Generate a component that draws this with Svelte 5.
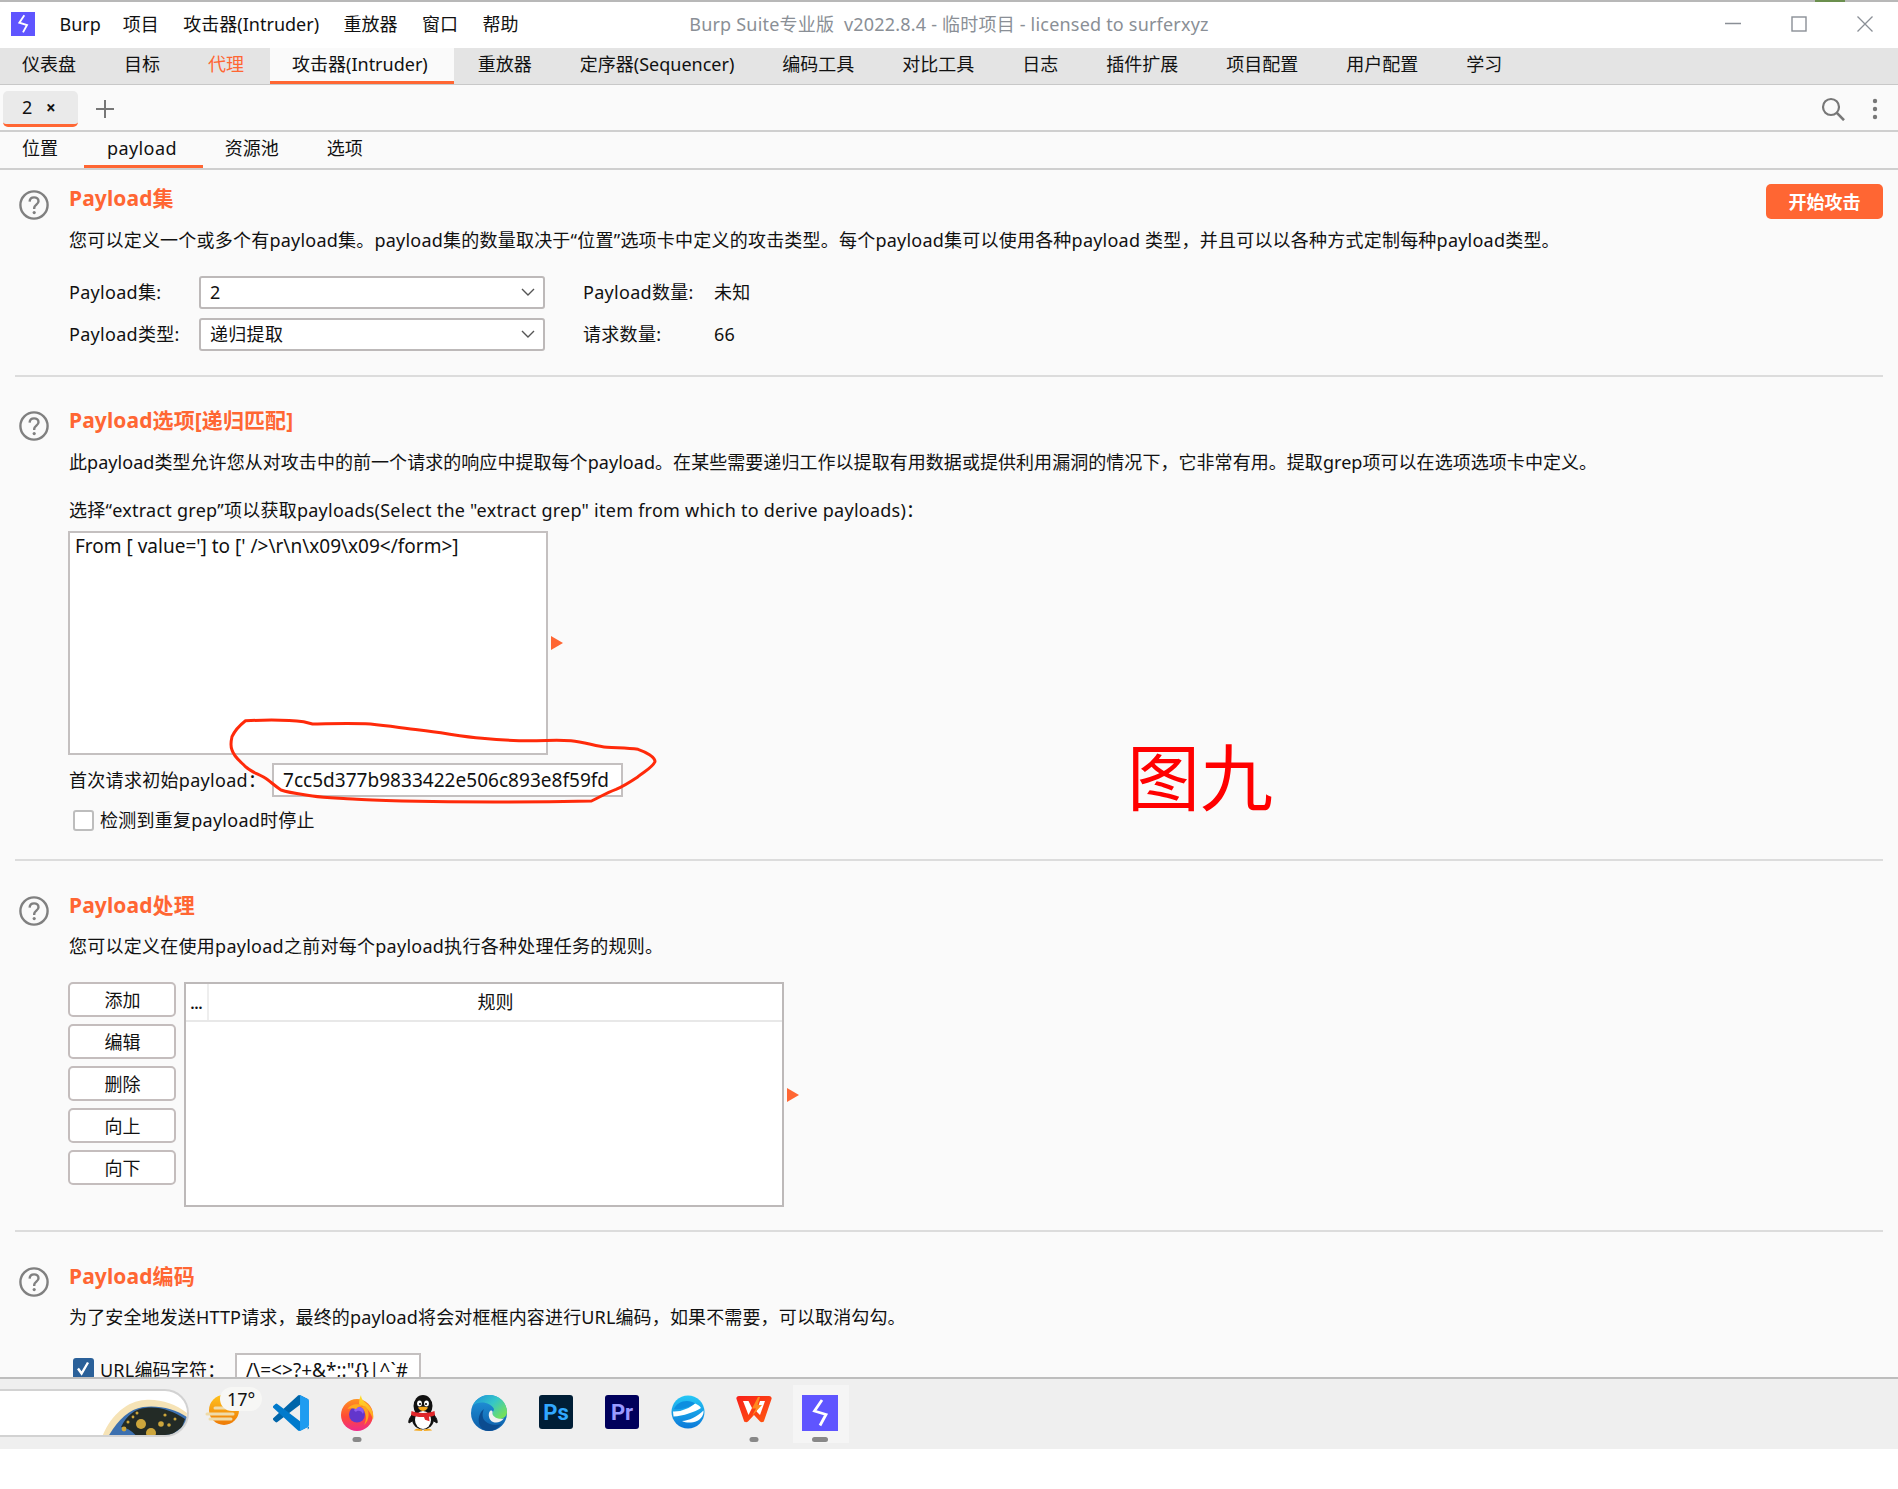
<script>
  const menu = ['Burp', '项目', '攻击器(Intruder)', '重放器', '窗口', '帮助'];
  const tabs = ['仪表盘', '目标', '代理', '攻击器(Intruder)', '重放器', '定序器(Sequencer)', '编码工具', '对比工具', '日志', '插件扩展', '项目配置', '用户配置', '学习'];
  const subs = ['位置', 'payload', '资源池', '选项'];
  const btns = ['添加', '编辑', '删除', '向上', '向下'];
</script>

{#snippet help()}
  <svg class="help" viewBox="0 0 32 32" width="32" height="32">
    <circle cx="16" cy="16" r="13.6" fill="none" stroke="#808080" stroke-width="2.4" />
    <path d="M11.6 12.6c.2-2.7 2-4.2 4.5-4.2 2.6 0 4.4 1.6 4.4 3.8 0 3.2-4.3 3.6-4.3 6.8v1" fill="none" stroke="#808080" stroke-width="2.4" />
    <circle cx="16.2" cy="23.6" r="1.6" fill="#808080" />
  </svg>
{/snippet}

{#snippet chevron()}
  <svg class="chev" viewBox="0 0 14 8" width="14" height="8"><path d="M1 1l6 6 6-6" fill="none" stroke="#555" stroke-width="1.4" /></svg>
{/snippet}

{#snippet burp(size)}
  <svg viewBox="0 0 36 36" width={size} height={size}>
    <rect width="36" height="36" fill="#5f55ff" />
    <path d="M20 5 L12.500 16 L24 19.500 L18 30.500" fill="none" stroke="#fff" stroke-width="2.800" stroke-linejoin="miter" />
  </svg>
{/snippet}

<div class="page">
  <div class="corner-bits"><span class="green"></span></div>
  <div class="win">
    <header class="title">
      <div class="menu">
        <span class="logo">{@render burp(24)}</span>
        {#each menu as m}<span class="mi">{m}</span>{/each}
      </div>
      <div class="ttl">Burp Suite专业版&nbsp; v2022.8.4 - 临时项目 - licensed to surferxyz</div>
      <div class="ctrl">
        <svg viewBox="0 0 18 16" width="18" height="16"><path d="M1 7.500h16" stroke="#8a8f96" stroke-width="1.400" /></svg>
        <svg viewBox="0 0 16 16" width="16" height="16"><rect x="1" y="1" width="14" height="14" fill="none" stroke="#8a8f96" stroke-width="1.400" /></svg>
        <svg viewBox="0 0 18 16" width="18" height="16"><path d="M1.500 .5l15 15M16.500 .5l-15 15" stroke="#8a8f96" stroke-width="1.300" /></svg>
      </div>
    </header>

    <nav class="tabs">
      {#each tabs as t, i}
        <span class="tab" class:on={i === 3} class:hot={i === 2}>{t}</span>
      {/each}
    </nav>

    <div class="inst">
      <div class="inst-tab">2 <span class="x">×</span></div>
      <svg class="plus" viewBox="0 0 20 20" width="20" height="20"><path d="M10 1v18M1 10h18" stroke="#777" stroke-width="2" /></svg>
      <div class="inst-right">
        <svg viewBox="0 0 24 24" width="24" height="24"><circle cx="10" cy="10" r="8" fill="none" stroke="#777" stroke-width="2.200" /><path d="M15.600 15.600l7.400 7.600" stroke="#777" stroke-width="2.600" /></svg>
        <svg viewBox="0 0 6 22" width="6" height="22"><circle cx="3" cy="3" r="2.200" fill="#777" /><circle cx="3" cy="11" r="2.200" fill="#777" /><circle cx="3" cy="19" r="2.200" fill="#777" /></svg>
      </div>
    </div>

    <nav class="subs">
      {#each subs as s, i}<span class="sub" class:on={i === 1}>{s}</span>{/each}
    </nav>

    <main class="content">
      <section class="sec s1">
        {@render help()}
        <div>
          <div class="head-row">
            <h2>Payload集</h2>
            <button class="start">开始攻击</button>
          </div>
          <p class="desc d1">您可以定义一个或多个有payload集。payload集的数量取决于“位置”选项卡中定义的攻击类型。每个payload集可以使用各种payload 类型，并且可以以各种方式定制每种payload类型。</p>
          <div class="form">
            <label>Payload集:</label>
            <div class="select">2{@render chevron()}</div>
            <label class="k2">Payload数量:</label>
            <span>未知</span>
            <label>Payload类型:</label>
            <div class="select">递归提取{@render chevron()}</div>
            <label class="k2">请求数量:</label>
            <span>66</span>
          </div>
        </div>
      </section>

      <section class="sec s2">
        {@render help()}
        <div>
          <h2>Payload选项[递归匹配]</h2>
          <p class="desc d2">此payload类型允许您从对攻击中的前一个请求的响应中提取每个payload。在某些需要递归工作以提取有用数据或提供利用漏洞的情况下，它非常有用。提取grep项可以在选项选项卡中定义。</p>
          <p class="pick">选择“extract grep”项以获取payloads(Select the "extract grep" item from which to derive payloads)：</p>
          <div class="list-row">
            <div class="list">From [ value='] to [' /&gt;\r\n\x09\x09&lt;/form&gt;]</div>
            <i class="tri"></i>
          </div>
          <div class="first">
            <span>首次请求初始payload：</span>
            <div class="field">7cc5d377b9833422e506c893e8f59fd</div>
          </div>
          <div class="check"><i class="box"></i>检测到重复payload时停止</div>
        </div>
      </section>

      <section class="sec s3">
        {@render help()}
        <div>
          <h2>Payload处理</h2>
          <p class="desc d3">您可以定义在使用payload之前对每个payload执行各种处理任务的规则。</p>
          <div class="rules">
            <div class="btns">
              {#each btns as b}<button>{b}</button>{/each}
            </div>
            <div class="table">
              <div class="thead"><span class="dots">...</span><span class="rule">规则</span></div>
            </div>
            <i class="tri"></i>
          </div>
        </div>
      </section>

      <section class="sec s4">
        {@render help()}
        <div>
          <h2>Payload编码</h2>
          <p class="desc d4">为了安全地发送HTTP请求，最终的payload将会对框框内容进行URL编码，如果不需要，可以取消勾勾。</p>
          <div class="enc">
            <i class="box checked"><svg viewBox="0 0 20 20" width="20" height="20"><path d="M5 10.500l3.600 5L15 4.500" fill="none" stroke="#fff" stroke-width="2.400" /></svg></i>
            <span>URL编码字符：</span>
            <div class="field small">/\=&lt;&gt;?+&amp;*;:"{'{'}{'}'}|^`#</div>
          </div>
        </div>
      </section>
    </main>

    <div class="annot">图九</div>
    <svg class="scribble" viewBox="0 0 1898 1489" width="1898" height="1489">
      <path d="M245.500 720.700 C262 720 290 720 303.600 721.700 L312.500 724 C335 723.500 352 723 370.500 724 C390 726 402 728 419.600 730 C445 733 462 736.500 482 738.300 C500 740 518 741 535.700 740.700 C550 740.300 560 740 571 740.700 C585 742 596 746.500 607 747.300 C618 748 628 748 638 749.300 C646 752 655 757 655 761.700 C652 768 645 771 638 776.700 C630 782 624 786 616 789.300 C606 793 600 797 591.500 801 C540 802 450 802 402 801 C385 800.500 368 800 352.700 799 C340 798 326 798 312.500 796 C300 794 290 793 281 790 C275 786 272 783 268 780 C260 774 252 773 245.500 766.700 C240 761 234 757 232 750 C230 745 231 741 232 736.700 C235 730 240 725 245.500 720.700 Z" fill="none" stroke="#ff2a0a" stroke-width="3" stroke-linejoin="round" />
    </svg>
  </div>

  <footer class="taskbar">
    <div class="pill">
      <svg viewBox="0 0 90 46" width="90" height="46" class="wall">
        <path d="M5 46 C14 24 30 10 48 9 C64 8 78 13 90 22 V46 Z" fill="#f6e3b6" />
        <path d="M11 46 C20 30 32 18 46 16 C62 14 78 18 90 26 V46 Z" fill="#3c70b0" />
        <path d="M24 36 C30 24 38 18 48 17 C62 15 76 20 88 28 L85 36 L72 46 H40 C36 40 30 37 24 36 Z" fill="#232b26" />
        <g fill="#cda63c"><circle cx="44" cy="33" r="5" /><circle cx="54" cy="42" r="5" /><circle cx="64" cy="33" r="2.800" /><circle cx="27" cy="38" r="2.400" /><circle cx="31" cy="31" r="1.500" /><circle cx="40" cy="22" r="1.500" /><circle cx="68" cy="24" r="1.600" /><circle cx="78" cy="28" r="1.500" /><circle cx="72" cy="34" r="1.800" /><circle cx="36" cy="26" r="1.400" /></g>
      </svg>
    </div>
    <div class="cell weather">
      <svg viewBox="0 0 36 34" width="36" height="34">
        <defs><linearGradient id="sun" x1="0" y1="0" x2="0" y2="1"><stop offset="0" stop-color="#ffc21e" /><stop offset="1" stop-color="#ee7a06" /></linearGradient></defs>
        <circle cx="19" cy="15" r="15" fill="url(#sun)" />
        <path d="M10 13h18M2 19h26M5 24h21" stroke="#efdba9" stroke-width="3" stroke-linecap="round" />
      </svg>
      <span class="temp">17°</span>
    </div>
    <div class="cell">
      <svg viewBox="0 0 100 100" width="36" height="36">
        <path fill="#0065a9" d="M96.460 10.800 75.860.87a6.230 6.230 0 0 0-7.100 1.200L1.330 63.700a4.170 4.170 0 0 0 0 6.160l5.500 5a4.170 4.170 0 0 0 5.320.24l81.200-61.600c2.720-2.070 6.640-.13 6.640 3.280v-.24a6.250 6.250 0 0 0-3.540-5.630Z" />
        <path fill="#007acc" d="M96.460 89.200 75.860 99.130a6.230 6.230 0 0 1-7.100-1.200L1.330 36.300a4.170 4.170 0 0 1 0-6.160l5.500-5a4.170 4.170 0 0 1 5.320-.24l81.200 61.600c2.720 2.070 6.640.13 6.640 3.280v.24a6.250 6.250 0 0 1-3.540 5.630Z" />
        <path fill="#1f9cf0" d="M75.960 99.140a6.240 6.240 0 0 1-7.100-1.210c2.300 2.300 6.240.67 6.240-2.580V4.650c0-3.250-3.940-4.880-6.240-2.580a6.240 6.240 0 0 1 7.100-1.200l20.600 9.900A6.250 6.250 0 0 1 100 16.400v67.200a6.250 6.250 0 0 1-3.540 5.630Z" />
      </svg>
    </div>
    <div class="cell running">
      <svg viewBox="0 0 36 36" width="36" height="36">
        <defs>
          <linearGradient id="ff" x1="0" y1="0" x2="0" y2="1"><stop offset="0" stop-color="#ff9420" /><stop offset=".55" stop-color="#ff4a35" /><stop offset="1" stop-color="#ee2a8b" /></linearGradient>
          <linearGradient id="ffy" x1="0" y1="0" x2="0" y2="1"><stop offset="0" stop-color="#ffe02a" /><stop offset="1" stop-color="#ff9a1f" /></linearGradient>
        </defs>
        <circle cx="18" cy="20" r="16" fill="url(#ff)" />
        <path d="M22 0C22 6 28 8 31 12 34 16 35 20 34 25 32 17 27 11 20 9.500 20 5 21 2 22 0Z" fill="url(#ffy)" />
        <path d="M26 11C31 15 31 25 25 30 28 25 28 17 22 12Z" fill="#ffa01f" />
        <circle cx="18" cy="19.500" r="8" fill="#6236cc" />
        <path d="M15 15C17 11.500 21 11 24 13.500 25 15 25 17 24 19 23 16 20 15 18 16 17 17 16 17 15 15Z" fill="#8f5cf0" />
        <path d="M8.500 14C11 9.500 19 7.500 24 11 21 11 18.500 12 17 14 14 13 11 13 8.500 14Z" fill="#ffab1f" />
      </svg>
    </div>
    <div class="cell">
      <svg viewBox="0 0 30 36" width="30" height="36">
        <path d="M6 17C3 21 0 25 1 28l4-2.500M24 17c3 4 6 8 5 11l-4-2.500" fill="#111" stroke="#111" />
        <ellipse cx="15" cy="11" rx="9.500" ry="11" fill="#111" />
        <ellipse cx="15" cy="24" rx="11" ry="10.500" fill="#111" />
        <ellipse cx="15" cy="25" rx="8" ry="9" fill="#fff" />
        <ellipse cx="11.500" cy="8.500" rx="2.400" ry="3" fill="#fff" /><ellipse cx="18.500" cy="8.500" rx="2.400" ry="3" fill="#fff" />
        <circle cx="12" cy="9" r="1.100" fill="#111" /><circle cx="18" cy="9" r="1.100" fill="#111" />
        <path d="M10 12.500c2-1 8-1 10 0-1 2.500-3.500 3.500-5 3.500s-4-1-5-3.500Z" fill="#f5a81c" />
        <path d="M3.500 16c5 2.500 18 2.500 23 0l.5 4c-1.500 1-3.500 1.500-6 1.800l.5 4.500-4.500-1.500-1-2.800c-4 .3-9-.2-13-2Z" fill="#e0262a" />
        <path d="M6 35.500c1-2 5-2.500 7.500-1l1 1.500ZM24 35.500c-1-2-5-2.500-7.500-1l-1 1.500Z" fill="#f5a81c" />
      </svg>
    </div>
    <div class="cell">
      <svg viewBox="0 0 36 36" width="36" height="36">
        <defs>
          <linearGradient id="eg" x1="0" y1="0" x2="1" y2=".7"><stop offset="0" stop-color="#1b8fdc" /><stop offset=".55" stop-color="#35c6c8" /><stop offset="1" stop-color="#74e05c" /></linearGradient>
          <linearGradient id="eb" x1="0" y1="0" x2="0" y2="1"><stop offset="0" stop-color="#2398dd" /><stop offset="1" stop-color="#0c5ca8" /></linearGradient>
        </defs>
        <circle cx="18" cy="18" r="18" fill="url(#eb)" />
        <path d="M30 29C27 33 23 36 18 36 13 36 9 33 8 28 7 22 9 17 13 14 11 18 11 23 14 26 18 30 25 31 30 29Z" fill="#0b4c90" />
        <path d="M1.500 11C5 4 11 0 18 0 28 0 36 7 36 17 36 21.500 32 24 28 24 24 24 21 22 21 20 21 17 23 16.500 23 14 21 10 16 7.500 11 7.500 7 7.500 4 8.500 1.500 11Z" fill="url(#eg)" />
        <path d="M19 16C21 15 22 16 21.500 18 21 21 26 25 33 23.500 30 27 26 28.500 22 27 18 25.500 16.500 19 19 16Z" fill="#f0f0f0" />
      </svg>
    </div>
    <div class="cell">
      <svg viewBox="0 0 34 34" width="34" height="34">
        <rect width="34" height="34" rx="3" fill="#001e36" />
        <text x="17" y="25" text-anchor="middle" class="logo-t" fill="#31a8ff">Ps</text>
      </svg>
    </div>
    <div class="cell">
      <svg viewBox="0 0 34 34" width="34" height="34">
        <rect width="34" height="34" rx="3" fill="#00005b" />
        <text x="17" y="25" text-anchor="middle" class="logo-t" fill="#9999ff">Pr</text>
      </svg>
    </div>
    <div class="cell">
      <svg viewBox="0 0 34 34" width="34" height="34">
        <defs><linearGradient id="ze" x1="0" y1="0" x2="0" y2="1"><stop offset="0" stop-color="#26c8f6" /><stop offset="1" stop-color="#0b78d8" /></linearGradient></defs>
        <circle cx="17" cy="17" r="16.500" fill="url(#ze)" />
        <path d="M2 16.500C10 17 19 13 24 8.500 26 9 29 11 30 13 24 17 12 21 2.500 21.500Z" fill="#fff" />
        <path d="M11 26C18 25.500 26 22 32.500 15.500 33 20 30 24 26 26 21 28 15 28 11 26Z" fill="#fff" />
        <path d="M3 14C5 9 10 6 16 6 19 6 22 7 24 8.500 19 12 10 15 3 14Z" fill="#0d8fe0" />
      </svg>
    </div>
    <div class="cell running">
      <svg viewBox="0 0 36 28" width="36" height="28">
        <defs><linearGradient id="wp" x1="0" y1="0" x2="1" y2="1"><stop offset="0" stop-color="#f8201a" /><stop offset="1" stop-color="#ff5a10" /></linearGradient></defs>
        <path d="M3 1H33C35 1 36 2.500 35.500 4L28 26C27.500 27.500 25 27.500 24 26.500L18 20 12 26.500C11 27.500 8.500 27.500 8 26L.5 4C0 2.500 1 1 3 1Z" fill="url(#wp)" />
        <path d="M7 6H12.500L16 13 12.500 20Z" fill="#fff" />
        <path d="M24 6H29L24 20 20.500 16.500Z" fill="#fff" />
        <path d="M22 2 16 13.500H20L16 21 26 10H21.500L24 2Z" fill="#ff8a1f" />
      </svg>
    </div>
    <div class="cell active running long">{@render burp(36)}</div>
  </footer>
</div>

<style>
  :global(body) { margin: 0; background: #fff; }
  .page {
    width: 1898px; height: 1489px; position: relative; overflow: hidden;
    display: flex; flex-direction: column; background: #fff; line-height: 26px;
    font-family: "Noto Sans", "Noto Sans CJK SC", sans-serif; font-size: 18px; color: #111;
  }
  .corner-bits { height: 2px; background: #b8b8b8; flex: none; position: relative; }
  .green { position: absolute; left: 1815px; top: 0; width: 30px; height: 2px; background: #6b8f4e; }
  .win {
    flex: 1; min-height: 0; position: relative; display: flex; flex-direction: column;
    background: #fafafa; border-radius: 8px 8px 0 0; overflow: hidden;
  }
  .title {
    height: 46px; box-sizing: border-box; padding-bottom: 3px; flex: none; background: #fff; display: grid; grid-template-columns: 1fr auto 1fr; align-items: center;
  }
  .menu { display: flex; align-items: center; gap: 24.500px; padding-left: 11px; white-space: nowrap; }
  .logo { display: flex; }
  .mi:nth-child(2) { margin-right: -2.500px; }
  .ttl { color: #8a8f96; white-space: nowrap; letter-spacing: .2px; }
  .ctrl { display: flex; justify-content: flex-end; align-items: center; gap: 49px; padding-right: 24px; }
  .tabs {
    height: 36px; flex: none; background: #e4e4e4; display: flex; align-items: stretch; white-space: nowrap;
    box-shadow: 0 1px 0 #c8c8c8; margin-bottom: 1px;
  }
  .tab { padding: 0 24px; line-height: 33px; box-sizing: border-box; }
  .tab:first-child { padding-left: 22px; }
  .tab.hot { color: #ff6633; }
  .tab.on { background: #fafafa; border-bottom: 3px solid #ff6633; padding: 0 26px 0 22px; margin-left: 2px; }
  .inst {
    height: 47px; box-sizing: border-box; padding: 3px 0 0 3px; flex: none; display: flex; align-items: center; border-bottom: 2px solid #cfcfcf;
  }
  .inst-tab {
    width: 75px; height: 36px; box-sizing: border-box; background: #eaeaea; border-bottom: 3px solid #ff6633; border-radius: 5px;
    padding-left: 19px; line-height: 33px; white-space: nowrap;
  }
  .x { font-size: 17px; margin-left: 9px; font-weight: 700; }
  .plus { margin-left: 17px; }
  .inst-right { margin-left: auto; display: flex; align-items: center; gap: 27px; padding-right: 20px; }
  .subs { height: 36px; flex: none; display: flex; border-bottom: 2px solid #cfcfcf; white-space: nowrap; padding-left: 22px; }
  .sub { line-height: 33px; margin-right: 48px; box-sizing: border-box; height: 36px; position: relative; }
  .sub:first-child { margin-right: 49px; }
  .sub.on { border-bottom: 3px solid #ff6633; padding: 0 26px 0 23px; margin: 0 22px 0 -23px; letter-spacing: .4px; }
  .content { flex: 1; min-height: 0; overflow: hidden; }
  .sec {
    display: grid; grid-template-columns: 54px 1fr; margin: 0 15px; border-bottom: 2px solid #dcdcdc;
  }
  .sec:last-child { border-bottom: none; }
  .s1 { padding: 15px 0 24px; }
  .s2 { padding: 30px 0 26px; }
  .s3 { padding: 31px 0 23px; }
  .s4 { padding: 31px 0 0; }
  .help { margin: 3px 0 0 3px; }
  .s1 .help { margin-top: 4px; }
  h2 { margin: 0; color: #ff6633; font-size: 21px; font-weight: 700; line-height: 26px; letter-spacing: .1px; white-space: nowrap; }
  .head-row { display: flex; justify-content: space-between; height: 26px; }
  .start {
    width: 117px; height: 35px; margin-top: -1px; padding-bottom: 2px; background: #ff6633; color: #fff; border: none; border-radius: 5px;
    font: 700 18px "Noto Sans", "Noto Sans CJK SC", sans-serif;
  }
  .desc { margin: 16px 0 0; line-height: 26px; white-space: nowrap; }
  .d1 { letter-spacing: .22px; }
  .d2 { letter-spacing: .05px; margin-top: 16px; }
  .d3 { letter-spacing: .26px; margin-top: 15px; }
  .d4 { letter-spacing: .14px; margin-top: 15px; }
  .form {
    display: grid; grid-template-columns: 130px 346px 169px auto; row-gap: 9px; margin-top: 23px; align-items: center; justify-content: start;
    white-space: nowrap; letter-spacing: .3px;
  }
  .form > label, .form > span { position: relative; top: -1px; }
  .k2 { margin-left: 38px; }
  .select {
    height: 33px; box-sizing: border-box; background: #fff; border: 2px solid #bdb9b9; border-radius: 3px; padding: 0 8px 2px 9px; display: flex;
    align-items: center; justify-content: space-between;
  }
  .pick { margin: 22px 0 0; line-height: 26px; white-space: nowrap; letter-spacing: .25px; }
  .list-row { display: flex; align-items: center; margin-top: 8px; }
  .list {
    width: 480px; height: 224px; box-sizing: border-box; background: #fff; border: 2px solid #c4c0c0; padding: 0 5px; line-height: 26px; margin-left: -1px; font-size: 19px;
  }
  .tri { width: 0; height: 0; border-left: 12px solid #ff6633; border-top: 7.500px solid transparent; border-bottom: 7.500px solid transparent; margin-left: 3px; }
  .first { display: flex; align-items: center; margin-top: 8px; height: 34px; }
  .first span { width: 203px; white-space: nowrap; letter-spacing: .3px; }
  .field { background: #fff; border: 2px solid #c4c0c0; box-sizing: border-box; height: 34px; width: 351px; padding-left: 9px; line-height: 30px; white-space: nowrap; font-size: 19px; letter-spacing: .03px; }
  .check { display: flex; align-items: center; height: 26px; margin-top: 10px; white-space: nowrap; letter-spacing: .25px; }
  .box {
    width: 21px; height: 21px; box-sizing: border-box; background: #fff; border: 2px solid #bdbdbd; border-radius: 3px; margin: 0 6px 0 4px; display: block; flex: none;
  }
  .box.checked { background: #2a6099; border: none; overflow: hidden; }
  .rules { display: flex; align-items: center; margin-top: 23px; }
  .btns { display: flex; flex-direction: column; gap: 7px; width: 108px; margin: 0 8px 0 -1px; align-self: flex-start; }
  .btns button {
    height: 35px; background: #fff; border: 2px solid #c4bdbd; border-radius: 5px; font: 18px "Noto Sans", "Noto Sans CJK SC", sans-serif; color: #111; padding: 0 0 2px 1px;
  }
  .table { width: 600px; height: 225px; box-sizing: border-box; background: #fff; border: 2px solid #bdb9b9; }
  .thead { height: 36px; display: flex; border-bottom: 2px solid #e8e8e8; }
  .dots { width: 21px; border-right: 2px solid #eee; text-align: center; line-height: 40px; font-size: 14px; font-weight: 700; }
  .rule { flex: 1; text-align: center; line-height: 37px; }
  .enc { display: flex; align-items: flex-start; margin-top: 23px; white-space: nowrap; }
  .enc .box { margin-top: 5px; }
  .enc span { width: 135px; line-height: 28px; margin-top: 3px; letter-spacing: .2px; }
  .field.small { width: 186px; height: 34px; line-height: 30px; }
  .annot { position: absolute; left: 1127px; top: 721px; font-size: 73px; line-height: 100px; color: #ff0000; font-family: "Noto Sans CJK SC", sans-serif; }
  .scribble { position: absolute; left: 0; top: -2px; pointer-events: none; }

  .taskbar {
    height: 70px; flex: none; background: #efefef; border-top: 2px solid #bdbdbd; display: flex; align-items: flex-start; margin-bottom: 40px; position: relative;
  }
  .pill {
    width: 189px; height: 48px; margin-top: 10px; box-sizing: border-box; background: #fff; border: 2px solid #d2d2d2; border-left: none; border-radius: 0 24px 24px 0; overflow: hidden;
    display: flex; justify-content: flex-end; flex: none; margin-right: 3px;
  }
  .wall { flex: none; }
  .cell { width: 66.100px; height: 60px; flex: none; display: flex; justify-content: center; padding-top: 16px; box-sizing: border-box; position: relative; }
  .cell svg { display: block; }
  .weather svg { margin-right: 4px; }
  .temp { position: absolute; left: 28px; top: 8px; background: #f7f7f5; border-radius: 17px; padding: 0 7px; height: 24px; line-height: 24px; font-size: 18px; white-space: nowrap; }
  .running::after {
    content: ""; position: absolute; left: 50%; top: 58px; width: 9px; height: 5px; border-radius: 3px; background: #888; transform: translateX(-50%);
  }
  .long::after { width: 16px; }
  .active::before { content: ""; position: absolute; left: 6px; top: 6px; right: 4px; bottom: -4px; background: #f5f5f5; }
  .active svg { position: relative; }
  .logo-t { font: 700 22px "Roboto", "Noto Sans", sans-serif; }
</style>
